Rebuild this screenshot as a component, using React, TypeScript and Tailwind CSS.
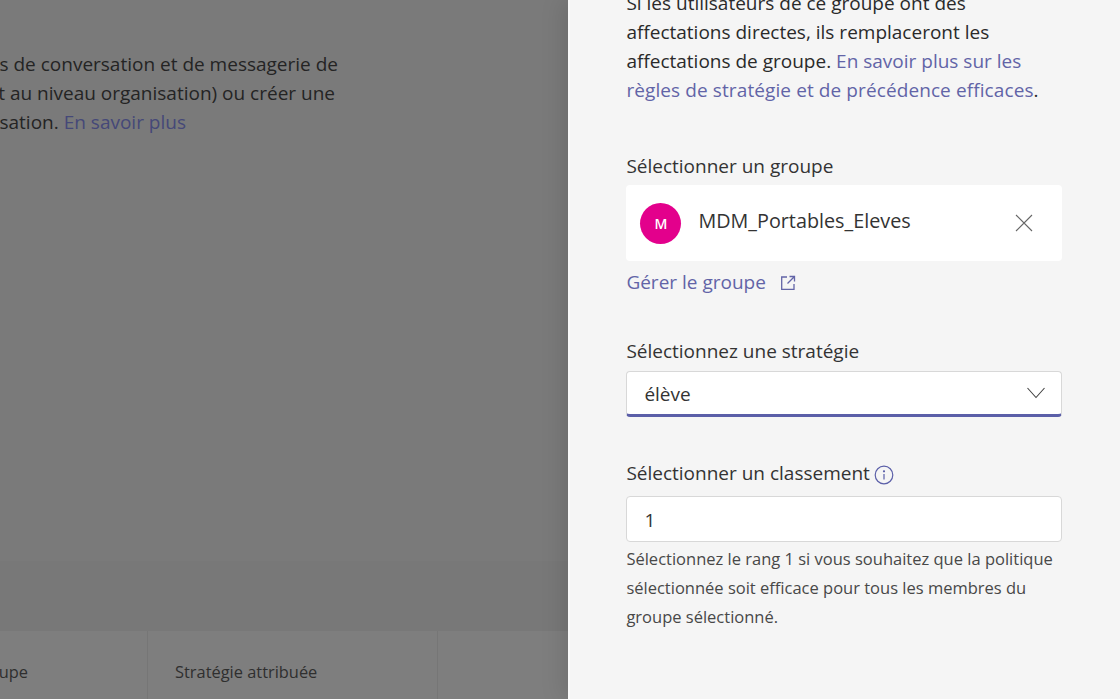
const font = "font-['Open_Sans','Noto_Sans',sans-serif]";

function TextLine({ width, children }: { width: string; children: React.ReactNode }) {
  return <div className={`flex h-[29px] items-center justify-end whitespace-nowrap ${width}`}>{children}</div>;
}

function Backdrop() {
  return (
    <div className="flex w-[568px] flex-col overflow-hidden bg-[#7a7a7a]">
      <div className="flex h-[561px] flex-col pt-[50px] text-[19px] text-[#242424]">
        <TextLine width="w-[338px]">s de conversation et de messagerie de</TextLine>
        <TextLine width="w-[335px]">t au niveau organisation) ou créer une</TextLine>
        <TextLine width="w-[186px]">
          <span>sation.&nbsp;</span>
          <span className="text-[#454878]">En savoir plus</span>
        </TextLine>
      </div>
      <div className="h-[70px] bg-[#787878]" />
      <div className="flex h-[68px] bg-[#7e7e7e] text-[16.4px] text-[#2f2f2f]">
        <div className="flex w-[148px] items-center justify-end border-r border-[#767676] pt-[14px] pr-[119px]">oupe</div>
        <div className="flex w-[290px] items-center border-r border-[#767676] pt-[14px] pl-[27px]">Stratégie attribuée</div>
      </div>
    </div>
  );
}

function Panel() {
  return (
    <div className="relative flex-1 border-l-2 border-[#fafafa] bg-[#f5f5f5] pl-[56.4px] pr-[58px] text-[19px] text-[#2a2a2a] shadow-[-6px_0_22px_rgba(0,0,0,0.1)]">
      <p className="-mt-[11px] leading-[29px]">
        Si les utilisateurs de ce groupe ont des
        <br />
        affectations directes, ils remplaceront les
        <br />
        affectations de groupe. <span className="text-[#6264a7]">En savoir plus sur les</span>
        <br />
        <span className="tracking-[0.1px] text-[#6264a7]">règles de stratégie et de précédence efficaces</span>.
      </p>

      <label className="mt-[47px] block leading-[29px] text-[#333]">Sélectionner un groupe</label>
      <div className="mt-[4px] flex h-[76px] items-center rounded-[4px] bg-white pl-[14px] pr-[28px]">
        <div className="flex h-[41px] w-[41px] items-center justify-center rounded-full bg-[#e3008c] text-[14px] font-semibold text-white">M</div>
        <span className="-mt-[5px] ml-[17px] flex-1 text-[19.8px] font-medium text-[#333]">MDM_Portables_Eleves</span>
        <svg width="20" height="20" viewBox="0 0 20 20" fill="none" stroke="#666" strokeWidth="1.1">
          <path d="M2 2 18 18M18 2 2 18" />
        </svg>
      </div>
      <div className="mt-[7px] flex h-[29px] items-center text-[#6264a7]">
        Gérer le groupe
        <svg className="ml-[14px]" width="16" height="16" viewBox="0 0 16 16" fill="none" stroke="currentColor" strokeWidth="1.3">
          <path d="M7 2H1.7v12.3H14V9" />
          <path d="M9.5 1.5h5v5M14.5 1.5 7.5 8.5" />
        </svg>
      </div>

      <label className="mt-[40px] block leading-[29px] text-[#333]">Sélectionnez une stratégie</label>
      <div className="mt-[5px] flex h-[46px] items-center rounded-[4px] border border-b-[3px] border-[#d8d8d8] border-b-[#5b5fa8] bg-white pt-[2px] pl-[17px] pr-[15px] text-[#333]">
        <span className="flex-1">élève</span>
        <svg className="-mt-[2px]" width="20" height="12" viewBox="0 0 20 12" fill="none" stroke="#444" strokeWidth="1.1">
          <path d="M1.5 1 10 10.5 18.5 1" />
        </svg>
      </div>

      <label className="mt-[42px] flex h-[29px] items-center text-[#333]">
        Sélectionner un classement
        <svg className="ml-[4px] mt-[2px]" width="20" height="20" viewBox="0 0 20 20" fill="none" stroke="#5b5fa8" strokeWidth="1.2">
          <circle cx="10" cy="10" r="8.8" />
          <path d="M10 9v5.5" />
          <circle cx="10" cy="6.3" r="0.5" fill="#5b5fa8" />
        </svg>
      </label>
      <div className="mt-[8px] flex h-[46px] items-center rounded-[4px] border border-[#d8d8d8] bg-white pt-[2px] pl-[17px] text-[#333]">1</div>
      <p className="mt-[2px] text-[16.5px] leading-[29px] text-[#484848]">
        Sélectionnez le rang 1 si vous souhaitez que la politique sélectionnée soit efficace pour tous les membres du groupe sélectionné.
      </p>
    </div>
  );
}

export default function App() {
  return (
    <div className={`flex h-[699px] w-[1120px] overflow-hidden ${font}`}>
      <Backdrop />
      <Panel />
    </div>
  );
}
